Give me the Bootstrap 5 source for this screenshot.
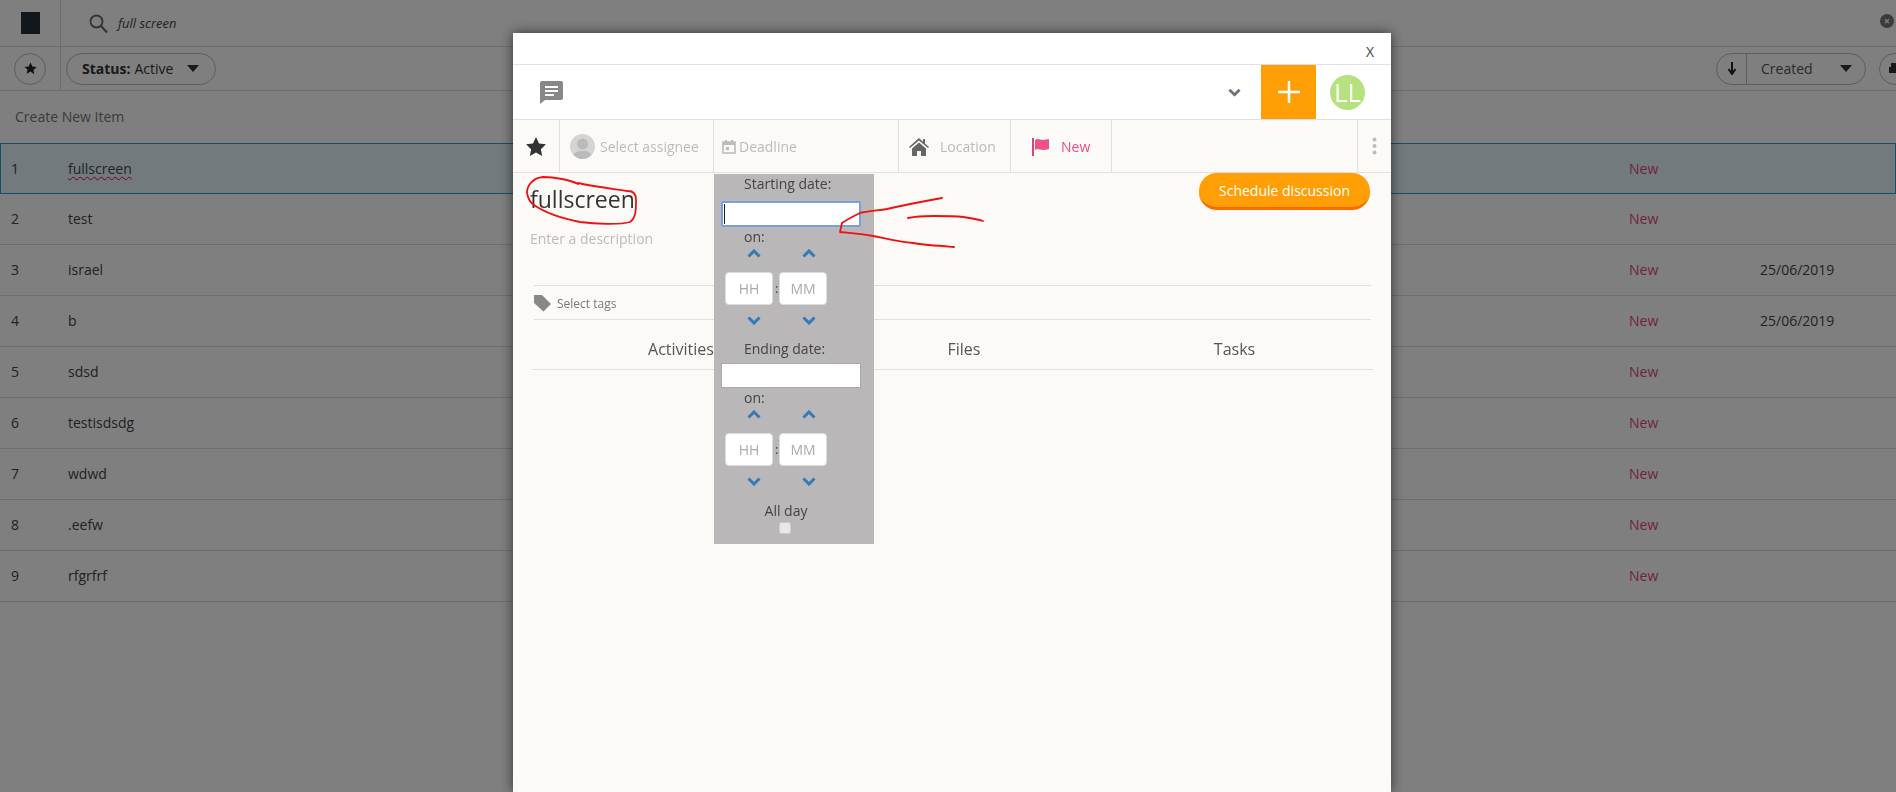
<!DOCTYPE html>
<html lang="en">
<head>
  <meta charset="UTF-8">
  <title>Items</title>
  <link rel="stylesheet" href="https://cdn.jsdelivr.net/npm/bootstrap@5.3.0/dist/css/bootstrap.min.css">
  <style>
    html, body { height: 100%; overflow: hidden; }
    body { font-family: "Open Sans", sans-serif; font-size: 14px; color: #333; background: #fff; }

    /* page behind the dialog */
    .top-bar { height: 47px; border-bottom: 1px solid #ddd; }
    .filter-bar { height: 44px; border-bottom: 1px solid #ddd; }
    .logo-cell { width: 61px; flex: none; border-right: 1px solid #ddd; }
    .logo-box { width: 19px; height: 22px; background: #212f3a; }
    .search-text { font-style: italic; font-size: 13px; color: #444; margin-left: 10px; }
    .search-wrap { padding-left: 28px; padding-top: 1px; }
    .clear-btn { position: absolute; right: 2px; top: 14px; width: 14px; height: 14px; border-radius: 50%; background: #777; color: #fff; font-size: 11px; line-height: 14px; text-align: center; font-weight: 700; }
    .round-btn { width: 32px; height: 32px; border: 1px solid #bbb; border-radius: 50%; }
    .pill { height: 32px; border: 1px solid #bbb; border-radius: 16px; }
    .status-pill { width: 150px; margin-left: 5px; padding-left: 15px; font-size: 14px; }
    .status-pill b { margin-right: 4px; font-weight: 700; }
    .tri { width: 0; height: 0; border: 6px solid transparent; border-top: 7px solid #333; border-bottom: 0; }
    .sort-pill { width: 150px; }
    .sort-arrow { width: 30px; border-right: 1px solid #bbb; height: 100%; }
    .sort-name { padding-left: 14px; width: 93px; color: #555; }
    .print-btn { margin-left: 13px; margin-right: -15px; flex: none; }
    .create-row { height: 52px; padding-left: 15px; padding-bottom: 2px; color: #777; font-size: 14px; }
    .item-row { height: 51px; padding-bottom: 1px; border-bottom: 1px solid #ddd; font-size: 14px; color: #444; }
    .item-row.picked { padding-bottom: 0; background: #e4f4fb; border-bottom: 0; box-shadow: inset 0 0 0 1px #2a9fc9; }
    .num-cell { width: 68px; padding-left: 11px; flex: none; }
    .name-cell { width: 1561px; flex: none; }
    .state-cell { width: 131px; flex: none; color: #e04a72; }
    .squiggle { text-decoration: underline wavy #d0103a 1px; text-underline-offset: 2px; }
    .dim-layer { position: fixed; inset: 0; background: rgba(0,0,0,.5); }

    /* dialog */
    .dlg { position: fixed; left: 513px; top: 33px; width: 878px; bottom: 0; background: #fbfaf6; box-shadow: 0 0 12px rgba(0,0,0,.6); }
    .dlg-title { height: 32px; background: #fff; border-bottom: 1px solid #e3e1e6; padding-right: 17px; padding-top: 9px; color: #444; font-size: 14px; line-height: 20px; }
    .dlg-head { height: 55px; background: #fff; border-bottom: 1px solid #e2e0dc; padding-left: 26px; }
    .head-chevron { margin-right: 20px; }
    .add-box { width: 55px; height: 54px; background: #ff9f05; }
    .avatar-ll { width: 35px; height: 35px; border-radius: 50%; background: #b5e27e; color: #fff; font-size: 26px; line-height: 35px; text-align: center; margin: 0 26px 0 14px; }
    .tool-row { height: 53px; border-bottom: 1px solid #e2e0dc; color: #bbb; font-size: 14px; }
    .tool-cell { border-right: 1px solid #e2e0dc; height: 100%; flex: none; padding-top: 1px; }
    .cell-star { width: 47px; }
    .cell-person { width: 154px; padding-left: 10px; gap: 5px; }
    .cell-deadline { width: 185px; padding-left: 8px; gap: 3px; }
    .cell-place { width: 112px; padding-left: 10px; gap: 11px; }
    .cell-state { width: 101px; padding-left: 21px; gap: 11px; color: #ef4b86; }
    .cell-blank { width: 246px; }
    .face { width: 25px; height: 25px; border-radius: 50%; background: #d5d4d2; overflow: hidden; }

    .dlg-body { position: relative; padding: 0 17px; }
    .sched-btn { position: absolute; top: 0; left: 686px; width: 171px; height: 37px; border: 0; border-bottom: 3px solid #f96a00; border-radius: 18px; background: #ff9f05; color: #fff; font-size: 14px; padding: 0; }
    .item-title { font-size: 23px; color: #333; padding-top: 10px; height: 50px; line-height: 32px; }
    .item-desc { color: #bbb; font-size: 14px; height: 62px; padding-top: 5px; }
    .tag-row { height: 35px; padding-top: 2px; margin-left: 4px; margin-right: 3px; gap: 6px; border-top: 1px solid #e2e0dc; border-bottom: 1px solid #e2e0dc; font-size: 12px; color: #777; }
    .tab-row { height: 50px; padding-top: 9px; border-bottom: 1px solid #e2e0dc; color: #555; font-size: 16px; margin-right: 1px; margin-left: 2px; }
    .tab-item { text-align: center; }
    .tab-first { width: 298px; }
    .tab-second { width: 268px; }
    .tab-third { width: 273px; }

    /* date popup */
    .date-pop { position: absolute; left: 201px; top: 1px; width: 160px; height: 370px; background: #b9b7b8; color: #444; font-size: 14px; }
    .pop-label { height: 20px; line-height: 20px; padding-left: 30px; }
    .date-field { display: block; width: 140px; height: 26px; margin: 7px 0 0 7px; border: 1px solid #aaa; background-color: #fff; }
    .date-field.on { border: 2px solid #7c9fdc; border-radius: 2px; background-image: linear-gradient(#222,#222); background-size: 1px 20px; background-position: 1px center; background-repeat: no-repeat; }
    .date-field.off { height: 25px; margin-top: 4px; }
    .on-label { margin-top: 0; }
    .end-label { margin-top: 14px; }
    .spin-row { padding-left: 15px; gap: 6px; }
    .spin-up { margin-top: 2px; }
    .spin-down { margin-top: 11px; }
    .spin-col { width: 49px; }
    .chev-blue { display: block; margin: 0 auto; color: #337ab7; }
    .chev-blue.flip { transform: rotate(180deg); }
    .time-row { margin-top: 14px; padding-left: 11px; gap: 6px; }
    .time-box { width: 48px; height: 33px; background: #fff; border: 1px solid #ddd; border-radius: 4px; color: #aaa; text-align: center; line-height: 31px; font-size: 14px; }
    .time-colon { line-height: 33px; margin: 0 -4px; width: 2px; font-size: 13px; color: #444; }
    .day-label { margin-top: 15px; height: 20px; line-height: 20px; text-align: center; padding-right: 16px; }
    .check-mock { width: 12px; height: 12px; background: #e8e8e8; border: 1px solid #ccc; border-radius: 2px; margin: 1px 0 0 65px; }

    .ink { position: fixed; inset: 0; width: 1896px; height: 792px; pointer-events: none; }
  </style>
</head>
<body>

<svg width="0" height="0" class="d-block">
  <symbol id="chev" viewBox="0 0 14 9"><path d="M1.5 7.5 7 2l5.500 5.500" fill="none" stroke="currentColor" stroke-width="3"/></symbol>
</svg>

<div class="top-bar d-flex position-relative">
  <div class="logo-cell d-flex align-items-center justify-content-center"><div class="logo-box"></div></div>
  <div class="search-wrap d-flex align-items-center">
    <svg width="19" height="20" viewBox="0 0 19 20"><circle cx="7.500" cy="7.500" r="6" fill="none" stroke="#666" stroke-width="1.800"/><path d="M12 12l6 6.500" stroke="#666" stroke-width="2.200"/></svg>
    <span class="search-text">full screen</span>
  </div>
  <div class="clear-btn">×</div>
</div>

<div class="filter-bar d-flex align-items-center">
  <div class="logo-cell d-flex align-items-center justify-content-center h-100">
    <div class="round-btn d-flex align-items-center justify-content-center">
      <svg width="13" height="13" viewBox="0 0 24 24"><path d="M12 1l3.400 7.300 7.900 1-5.800 5.400 1.500 7.900L12 17.700l-7 3.900 1.500-7.900L.7 9.300l7.900-1z" fill="#222"/></svg>
    </div>
  </div>
  <div class="pill status-pill d-flex align-items-center"><b>Status:</b> Active <span class="tri ms-auto me-3"></span></div>
  <div class="pill sort-pill d-flex align-items-center ms-auto">
    <div class="sort-arrow d-flex align-items-center justify-content-center">
      <svg width="10" height="13" viewBox="0 0 10 13"><path d="M5 0v10M1.500 7 5 12l3.500-5" fill="none" stroke="#222" stroke-width="2"/></svg>
    </div>
    <span class="sort-name">Created</span><span class="tri"></span>
  </div>
  <div class="round-btn print-btn d-flex align-items-center ps-2">
    <svg width="12" height="14" viewBox="0 0 12 14"><path d="M3 1h8v4H3zM1 5h11v6H1z" fill="#333"/></svg>
  </div>
</div>

<div class="create-row d-flex align-items-center">Create New Item</div>
<div id="rows"></div>

<div class="dim-layer"></div>

<div class="dlg d-flex flex-column">
  <div class="dlg-title text-end">X</div>

  <div class="dlg-head d-flex align-items-center">
    <svg width="25" height="25" viewBox="0 0 25 25"><path d="M3 1h19a2 2 0 0 1 2 2v15a2 2 0 0 1-2 2H6l-5 4V3a2 2 0 0 1 2-2z" fill="#888"/><path d="M6 6h13v2H6zM6 10h13v2H6zM6 14h9v2H6z" fill="#fff"/></svg>
    <svg class="head-chevron ms-auto text-secondary" width="13" height="9" viewBox="0 0 14 9" transform="rotate(180)"><use href="#chev"/></svg>
    <div class="add-box d-flex align-items-center justify-content-center">
      <svg width="22" height="22" viewBox="0 0 22 22"><path d="M11 0v22M0 11h22" stroke="#fff" stroke-width="2.500"/></svg>
    </div>
    <div class="avatar-ll">LL</div>
  </div>

  <div class="tool-row d-flex">
    <div class="tool-cell cell-star d-flex align-items-center justify-content-center">
      <svg width="20" height="19" viewBox="0 0 24 23"><path d="M12 0l3.700 7.800 8.300 1.100-6.100 5.800 1.600 8.300-7.500-4.100L4.500 23l1.600-8.300L0 8.900l8.300-1.100z" fill="#333"/></svg>
    </div>
    <div class="tool-cell cell-person d-flex align-items-center">
      <div class="face"><svg width="25" height="25" viewBox="0 0 25 25"><circle cx="12.500" cy="10" r="5.500" fill="#bbb"/><path d="M3 25c0-7 4-8 9.500-8s9.500 1 9.500 8z" fill="#bbb"/></svg></div>
      <span>Select assignee</span>
    </div>
    <div class="tool-cell cell-deadline d-flex align-items-center">
      <svg width="14" height="15" viewBox="0 0 14 15"><path d="M1 3h12v11H1z" fill="none" stroke="#bbb" stroke-width="1.600"/><path d="M1 3h12v3H1zM3 1h2v3H3zM9 1h2v3H9zM4 8h3v3H4z" fill="#bbb"/></svg>
      <span>Deadline</span>
    </div>
    <div class="tool-cell cell-place d-flex align-items-center">
      <svg width="20" height="18" viewBox="0 0 20 18"><path d="M10 0 0 9l1 1 9-7.500L19 10l1-1-4-3.500V1h-2v2.800zM3 10.500 10 4.500l7 6V18h-5v-5H8v5H3z" fill="#666"/></svg>
      <span>Location</span>
    </div>
    <div class="tool-cell cell-state d-flex align-items-center">
      <svg width="18" height="18" viewBox="0 0 18 18"><path d="M0 0h2v18H0z" fill="#d8447e"/><path d="M3 2c3-2 5 0 8 0 2 0 4-1 6-1v10c-2 .5-4 1-6 1-3 0-5-2-8 0z" fill="#f2508b"/></svg>
      <span>New</span>
    </div>
    <div class="tool-cell cell-blank"></div>
    <div class="flex-grow-1 d-flex align-items-center justify-content-center">
      <svg width="5" height="18" viewBox="0 0 5 18"><circle cx="2.500" cy="2.500" r="2" fill="#bbb"/><circle cx="2.500" cy="9" r="2" fill="#bbb"/><circle cx="2.500" cy="15.500" r="2" fill="#bbb"/></svg>
    </div>
  </div>

  <div class="dlg-body flex-grow-1">
    <button type="button" class="btn sched-btn">Schedule discussion</button>
    <div class="item-title">fullscreen</div>
    <div class="item-desc">Enter a description</div>
    <div class="tag-row d-flex align-items-center">
      <svg width="17" height="17" viewBox="0 0 17 17"><path d="M0 0h8l9 9-7.500 7.500L0 8z" fill="#888"/></svg>
      <span>Select tags</span>
    </div>
    <div class="tab-row d-flex align-items-center">
      <div class="tab-item tab-first">Activities</div>
      <div class="tab-item tab-second">Files</div>
      <div class="tab-item tab-third">Tasks</div>
    </div>

    <div class="date-pop">
      <div class="pop-label">Starting date:</div>
      <input class="date-field on" type="text" aria-label="Starting date">
      <div class="pop-label on-label">on:</div>
      <div id="startTime"></div>
      <div class="pop-label end-label">Ending date:</div>
      <input class="date-field off" type="text" aria-label="Ending date">
      <div class="pop-label on-label">on:</div>
      <div id="endTime"></div>
      <div class="day-label">All day</div>
      <div class="check-mock"></div>
    </div>
  </div>
</div>

<svg class="ink" viewBox="0 0 1896 792" fill="none" stroke="#f01010" stroke-width="1.800" stroke-linecap="round" stroke-linejoin="round">
  <path d="M578 184C570 180 555 177 543 177 533 178 527 185 527 193 528 199 531 203 534 205 544 212 560 218 580 222 595 224 620 225 630 222 636 218 636 210 636 200 636 194 634 191 628 191 615 189 595 187 578 183"/>
  <path d="M942 198C920 202 900 206 887 209 873 211 865 212 860 213 852 217 846 220 842 223L840 232C850 233 862 234 873 236 888 239 900 242 913 243 925 245 940 246 954 247"/>
  <path d="M908 218C918 216 925 216 933 216 945 216 955 216 963 217 970 218 977 219 983 221"/>
</svg>

<script>
  const rows = [
    ["1", "fullscreen", ""], ["2", "test", ""], ["3", "israel", "25/06/2019"],
    ["4", "b", "25/06/2019"], ["5", "sdsd", ""], ["6", "testisdsdg", ""],
    ["7", "wdwd", ""], ["8", ".eefw", ""], ["9", "rfgrfrf", ""]
  ];
  document.getElementById("rows").innerHTML = rows.map((r, i) => `
    <div class="item-row d-flex align-items-center ${i === 0 ? "picked" : ""}">
      <div class="num-cell">${r[0]}</div>
      <div class="name-cell">${i === 0 ? `<span class="squiggle">${r[1]}</span>` : r[1]}</div>
      <div class="state-cell">New</div>
      <div>${r[2]}</div>
    </div>`).join("");

  // the two time pickers are the same block
  const chevUp = `<svg width="14" height="9" class="chev-blue"><use href="#chev"/></svg>`;
  const chevDown = `<svg width="14" height="9" class="chev-blue flip"><use href="#chev"/></svg>`;
  const picker = `
    <div class="spin-row spin-up d-flex">${[0,1].map(() => `<div class="spin-col">${chevUp}</div>`).join("")}</div>
    <div class="time-row d-flex align-items-center">
      <div class="time-box">HH</div><div class="time-colon">:</div><div class="time-box">MM</div>
    </div>
    <div class="spin-row spin-down d-flex">${[0,1].map(() => `<div class="spin-col">${chevDown}</div>`).join("")}</div>`;
  document.getElementById("startTime").innerHTML = picker;
  document.getElementById("endTime").innerHTML = picker;
</script>

<script src="https://cdn.jsdelivr.net/npm/bootstrap@5.3.0/dist/js/bootstrap.bundle.min.js"></script>
</body>
</html>
